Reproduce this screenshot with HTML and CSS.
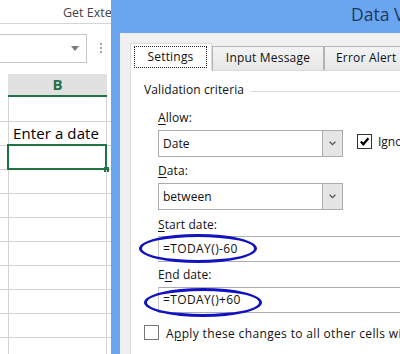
FILE: index.html
```html
<!DOCTYPE html>
<html>
<head>
<meta charset="utf-8">
<title>Data Validation</title>
<link rel="stylesheet" href="styles.css">
</head>
<body>
<div class="screen">
  <div class="sheet">
    <div class="ribbon">Get External Data</div>
    <div class="fbar">
      <div class="namebox"><span class="nb-arrow"></span></div>
      <div class="fdots"><i></i><i></i><i></i></div>
    </div>
    <div class="colhead"><div class="colhead-b">B</div></div>
    <div class="grid">
      <div class="row row-first"><div class="ca"></div><div class="cb"></div><div class="cc"></div></div>
      <div class="row"><div class="ca"></div><div class="cb cell-text">Enter a date</div><div class="cc"></div></div>
      <div class="row row-sel"><div class="ca"></div><div class="cb"></div><div class="cc"></div><div class="selbox"><span class="handle"></span></div></div>
      <div class="row"><div class="ca"></div><div class="cb"></div><div class="cc"></div></div>
      <div class="row"><div class="ca"></div><div class="cb"></div><div class="cc"></div></div>
      <div class="row"><div class="ca"></div><div class="cb"></div><div class="cc"></div></div>
      <div class="row"><div class="ca"></div><div class="cb"></div><div class="cc"></div></div>
      <div class="row"><div class="ca"></div><div class="cb"></div><div class="cc"></div></div>
      <div class="row"><div class="ca"></div><div class="cb"></div><div class="cc"></div></div>
      <div class="row"><div class="ca"></div><div class="cb"></div><div class="cc"></div></div>
      <div class="row"><div class="ca"></div><div class="cb"></div><div class="cc"></div></div>
    </div>
  </div>

  <div class="dialog">
    <div class="titlebar">Data Validation</div>
    <div class="dlg-body">
      <div class="tabs">
        <div class="tab tab-active"><span class="focus">Settings</span></div>
        <div class="tab tab-input">Input Message</div>
        <div class="tab tab-error">Error Alert</div>
      </div>
      <div class="panel">
        <div class="group"><span>Validation criteria</span><span class="group-rule"></span></div>
        <div class="crit">
          <div class="lbl lbl-allow"><u>A</u>llow:</div>
          <div class="combo-row">
            <div class="combo">
              <span class="combo-val">Date</span>
              <span class="combo-btn"><svg width="7" height="5" viewBox="0 0 7 5"><path d="M0.6 0.8 L3.5 3.7 L6.4 0.8" fill="none" stroke="#555" stroke-width="1.3"/></svg></span>
            </div>
            <div class="ignore">
              <span class="chk chk-on"><svg width="11" height="11" viewBox="0 0 11 11"><path d="M1.8 5.6 L4.3 8.3 L9.4 2.2" fill="none" stroke="#000" stroke-width="2.2"/></svg></span>
              <span class="chk-text">Ignore blank</span>
            </div>
          </div>
          <div class="lbl lbl-data"><u>D</u>ata:</div>
          <div class="combo combo-data">
            <span class="combo-val">between</span>
            <span class="combo-btn"><svg width="7" height="5" viewBox="0 0 7 5"><path d="M0.6 0.8 L3.5 3.7 L6.4 0.8" fill="none" stroke="#555" stroke-width="1.3"/></svg></span>
          </div>
          <div class="lbl lbl-start"><u>S</u>tart date:</div>
          <div class="field field-start"><span class="field-val">=TODAY()-60</span><span class="ellipse ellipse-start"></span></div>
          <div class="lbl lbl-end">E<u>n</u>d date:</div>
          <div class="field field-end"><span class="field-val">=TODAY()+60</span><span class="ellipse ellipse-end"></span></div>
        </div>
        <div class="apply">
          <span class="chk chk-off"></span>
          <span class="apply-text">A<u>p</u>ply these changes to all other cells with the same settings</span>
        </div>
      </div>
    </div>
  </div>
</div>
</body>
</html>
```

FILE: styles.css
```css
* { box-sizing: border-box; margin: 0; padding: 0; }

html, body {
  width: 400px;
  height: 354px;
  overflow: hidden;
  background: #fff;
}

body {
  font-family: "Open Sans", "Noto Sans", sans-serif;
  font-size: 12px;
  color: #111;
}

.screen {
  display: flex;
  width: 400px;
  height: 354px;
  overflow: hidden;
}

/* ---------- Excel sheet ---------- */
.sheet {
  width: 111px;
  flex: none;
  overflow: hidden;
  background: #fff;
  display: flex;
  flex-direction: column;
}

.ribbon {
  height: 24px;
  flex: none;
  border-bottom: 1px solid #d5d5d5;
  padding: 3px 0 0 63px;
  white-space: nowrap;
  font-size: 12.5px;
  line-height: 20px;
  color: #444;
}

.fbar {
  display: flex;
  align-items: flex-start;
  margin-top: 10px;
  height: 29px;
  flex: none;
}

.namebox {
  width: 88px;
  height: 29px;
  margin-left: -1px;
  border: 1px solid #c6c6c6;
  display: flex;
  align-items: center;
  justify-content: flex-end;
  padding-right: 7px;
}

.nb-arrow {
  width: 0;
  height: 0;
  border-left: 4px solid transparent;
  border-right: 4px solid transparent;
  border-top: 5px solid #7a7a7a;
}

.fdots {
  display: flex;
  flex-direction: column;
  gap: 2px;
  margin: 9px 0 0 13px;
}

.fdots i {
  display: block;
  width: 2px;
  height: 2px;
  background: #a6a6a6;
}

.colhead {
  margin-top: 11px;
  height: 23px;
  flex: none;
  display: flex;
}

.colhead-b {
  margin-left: 8px;
  width: 99px;
  background: #e1e1e1;
  border-bottom: 2px solid #217346;
  text-align: center;
  font-weight: 700;
  font-size: 15px;
  line-height: 21px;
  color: #217346;
}

.row {
  display: flex;
  height: 24px;
  flex: none;
  border-bottom: 1px solid #d4d4d4;
  position: relative;
}

.row-first { height: 25px; }

.ca { width: 9px; border-right: 1px solid #d4d4d4; }
.cb { width: 98px; border-right: 1px solid #d4d4d4; }
.cc { flex: 1; }

.cell-text {
  padding-left: 4px;
  font-size: 15px;
  line-height: 23px;
  letter-spacing: 0.1px;
  color: #000;
  white-space: nowrap;
}

.selbox {
  position: absolute;
  left: 7px;
  top: -2px;
  width: 100px;
  height: 26px;
  border: 2px solid #217346;
}

.handle {
  position: absolute;
  left: 95px;
  top: 21px;
  width: 5px;
  height: 5px;
  background: #217346;
}

/* ---------- Dialog ---------- */
.dialog {
  flex: 1;
  min-width: 0;
  display: flex;
  flex-direction: column;
  overflow: hidden;
}

.titlebar {
  height: 33px;
  flex: none;
  background: #6aa6f0;
  padding-left: 240px;
  white-space: nowrap;
  font-size: 17.5px;
  line-height: 29px;
  color: #1c3a5e;
}

.dlg-body {
  flex: 1;
  min-height: 0;
  background: #f0f0f0;
  border-left: 9px solid #6aa6f0;
  padding: 10px 0 0 10px;
  display: flex;
  flex-direction: column;
}

.tabs {
  display: flex;
  height: 28px;
  flex: none;
  margin-bottom: -1px;
  position: relative;
  z-index: 1;
}

.tab {
  flex: none;
  margin-top: 3px;
  height: 24px;
  border: 1px solid #b4b4b4;
  border-bottom: none;
  background: linear-gradient(#f3f3f3, #e7e7e7);
  line-height: 22px;
  text-align: center;
  white-space: nowrap;
  letter-spacing: 0.2px;
  color: #111;
}

.tab-active {
  margin-top: 0;
  height: 28px;
  width: 82px;
  background: #fff;
  border-color: #d9d9d9;
}

.focus {
  display: block;
  margin: 2px 0 0 3px;
  width: 73px;
  height: 22px;
  border: 1px dotted #222;
  line-height: 20px;
  text-align: center;
}

.tab-input { width: 112px; }

.tab-error {
  width: 100px;
  text-align: left;
  padding-left: 11px;
}

.panel {
  flex: 1;
  background: #fff;
  border-top: 1px solid #d9d9d9;
  border-left: 1px solid #d9d9d9;
  padding: 11px 0 0 13px;
  white-space: nowrap;
  overflow: hidden;
}

.group {
  display: flex;
  line-height: 16px;
  letter-spacing: 0.1px;
}

.group-rule {
  flex: 1;
  height: 1px;
  background: #dcdcdc;
  margin: 9px 0 0 7px;
}

.crit { padding-left: 14px; }

.lbl { line-height: 16px; letter-spacing: 0.1px; }
.lbl-allow { margin-top: 12px; }
.lbl-data { margin-top: 6px; }
.lbl-start { margin-top: 7px; }
.lbl-end { margin-top: 5px; }

u { text-decoration: underline; text-underline-offset: 2px; }

.combo-row {
  display: flex;
  align-items: flex-start;
  margin-top: 4px;
}

.combo {
  display: flex;
  width: 185px;
  height: 27px;
  flex: none;
  border: 1px solid #acacac;
  background: #fff;
}

.combo-data { margin-top: 4px; }

.combo-val {
  flex: 1;
  padding-left: 4px;
  line-height: 25px;
}

.combo-btn {
  width: 20px;
  background: #e5e5e5;
  border-left: 1px solid #acacac;
  display: flex;
  align-items: center;
  justify-content: center;
}

.ignore {
  display: flex;
  align-items: flex-start;
  gap: 6px;
  margin: 4px 0 0 14px;
}

.chk {
  width: 15px;
  height: 15px;
  flex: none;
  background: #fff;
  display: flex;
  align-items: center;
  justify-content: center;
}

.chk-on { border: 1px solid #333; }
.chk-off { border: 1px solid #777; }

.chk-text { line-height: 16px; }

.field {
  position: relative;
  width: 300px;
  height: 26px;
  border: 1px solid #abadb3;
  border-left-color: #c9ccd3;
  background: #fff;
}

.field-start { margin-top: 3px; }
.field-end { margin-top: 4px; }

.field-val {
  display: block;
  padding-left: 4px;
  line-height: 24px;
  letter-spacing: 0.4px;
}

.ellipse {
  position: absolute;
  width: 118px;
  height: 29px;
  border: 3px solid #1212c2;
  border-radius: 50%;
}

.ellipse-start { left: -20px; top: -3px; }
.ellipse-end { left: -15px; top: 0; }

.apply {
  display: flex;
  align-items: flex-start;
  gap: 7px;
  margin-top: 12px;
}

.apply-text {
  margin-top: 1px;
  line-height: 16px;
  letter-spacing: 0.35px;
}
```
